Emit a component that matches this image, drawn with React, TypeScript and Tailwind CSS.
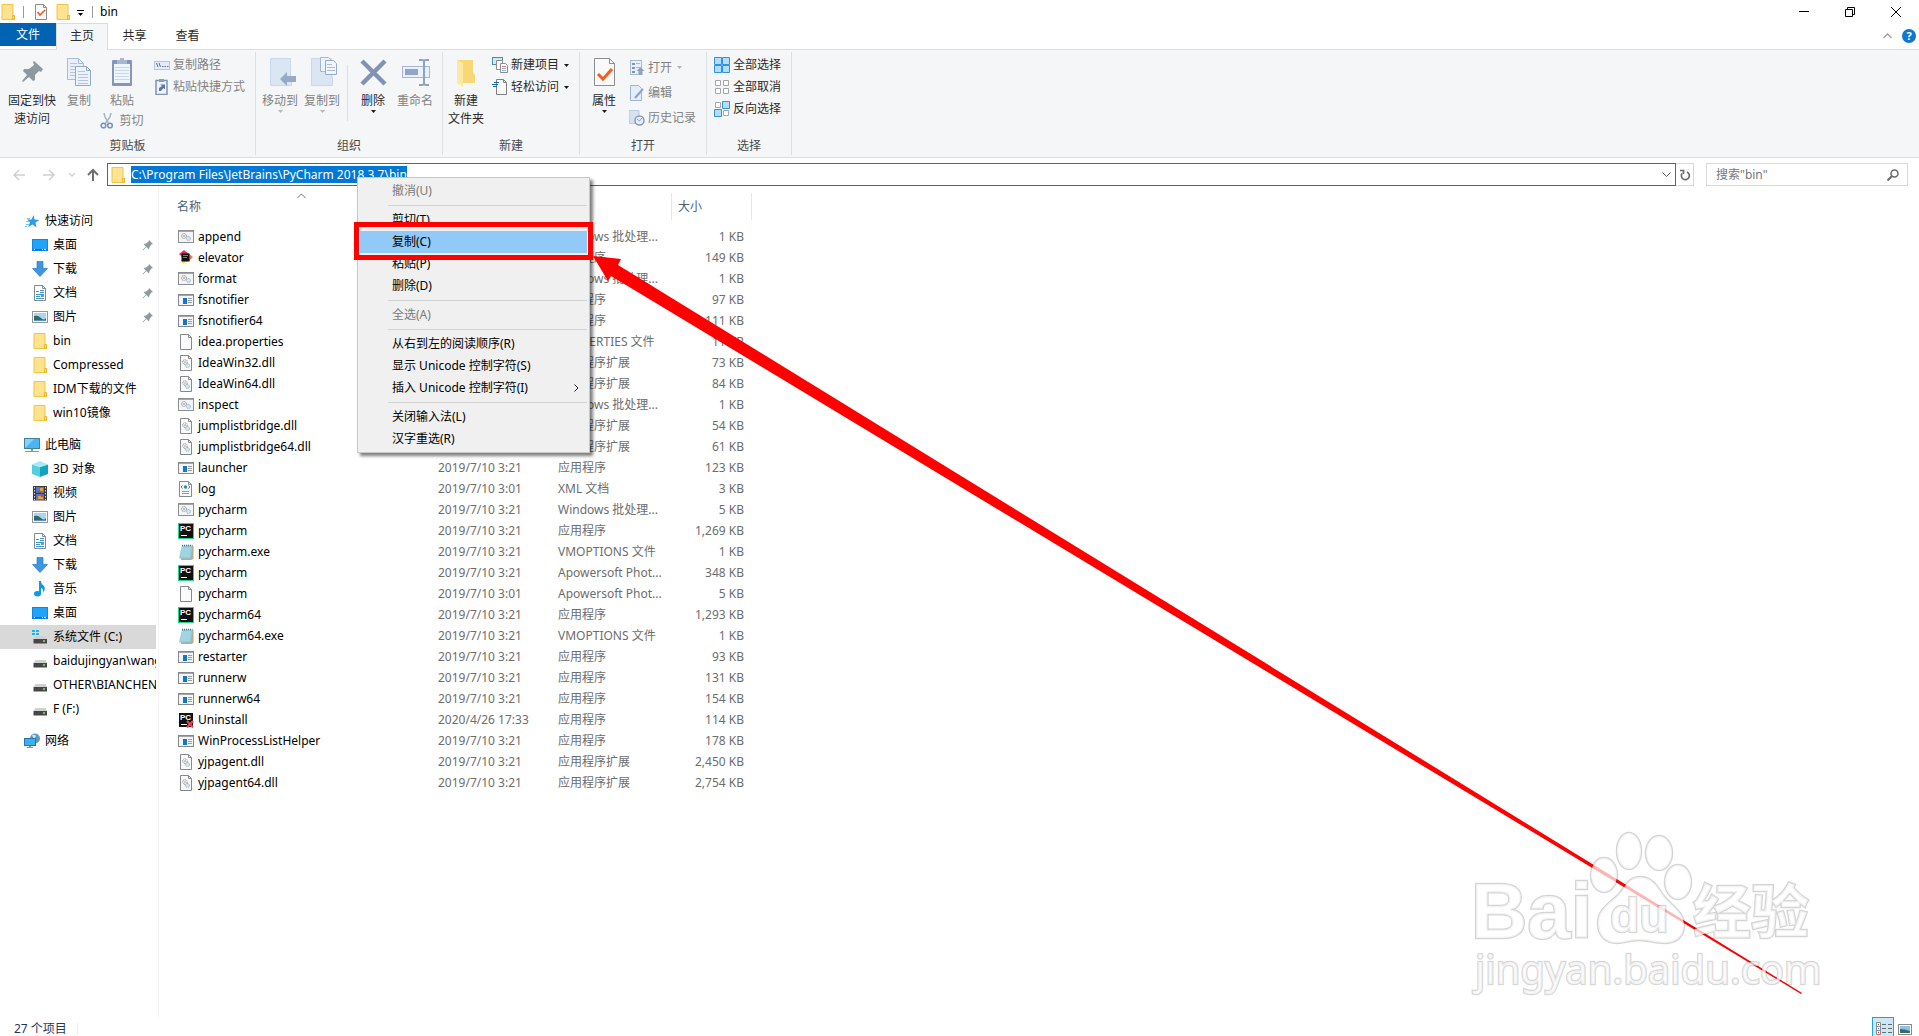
import { ReactNode } from "react";

type IconProps = { className?: string };

const FolderIcon = ({ className = "h-4 w-4" }: IconProps) => (
  <svg viewBox="0 0 16 16" className={className}>
    <path d="M2 .5h11v11h1.500v4H2z" fill="#ffe391" stroke="#f0c541" />
    <path d="M12.500 15.500v-4h2v4z" fill="#ffd76a" stroke="#e9b92f" />
  </svg>
);

const CheckDocIcon = ({ className = "h-4 w-4" }: IconProps) => (
  <svg viewBox="0 0 16 16" className={className}>
    <path d="M2.500 .5h8l3 3v12h-11z" fill="#fafafa" stroke="#8c8c8c" />
    <path d="M10.500 .5v3h3" fill="none" stroke="#8c8c8c" />
    <path d="M4.500 8l2.500 3 5-5" fill="none" stroke="#f25c19" strokeWidth="1.600" />
  </svg>
);

const Triangle = ({ className = "fill-[#1a1a1a]" }: IconProps) => (
  <svg viewBox="0 0 5 3" className={`h-[3px] w-[5px] shrink-0 ${className}`}>
    <path d="M0 0h5L2.500 3z" />
  </svg>
);

const PinBigIcon = () => (
  <svg viewBox="0 0 32 32" className="h-8 w-8">
    <path d="M18 4l9 8-2 3-2-1-4 4 0 5-2 1-4-4-6 5-1-1 5-6-4-4 1-2 5 0 5-4-1-3z" fill="#8d999f" />
  </svg>
);

const CopyBigIcon = () => (
  <svg viewBox="0 0 32 32" className="h-8 w-8">
    <path d="M4.500 1.500h11l5 5v16h-16z" fill="#e9f0f9" stroke="#a9bbd6" />
    <path d="M15.500 1.500v5h5" fill="none" stroke="#a9bbd6" />
    <path d="M7 6.500h7M7 9.500h7M7 12.500h5M7 15.500h5M7 18.500h5" stroke="#b4c4de" />
    <path d="M12.500 9.500h11l4 4v15h-15z" fill="#edf3fa" stroke="#95a9c9" />
    <path d="M23.500 9.500v4h4" fill="none" stroke="#95a9c9" />
    <path d="M15 14.500h7M15 17.500h10M15 20.500h10M15 23.500h10M15 26.500h10" stroke="#b4c4de" />
  </svg>
);

const PasteBigIcon = () => (
  <svg viewBox="0 0 32 32" className="h-8 w-8">
    <rect x="6" y="3" width="20" height="26" rx="1" fill="#8497ba" />
    <rect x="8" y="7" width="16" height="19" fill="#f0f5fb" />
    <path d="M11 5V3h3V1h4v2h3v4H11z" fill="#a9b8d1" />
    <path d="M9 10.500h14M9 13.500h14M9 16.500h14M9 19.500h14M9 22.500h14" stroke="#c9d7ea" />
  </svg>
);

const ScissorsIcon = () => (
  <svg viewBox="0 0 16 16" className="h-4 w-4" fill="none">
    <path d="M4 0l1 4 4 7M11 0l-1 4-5 7" stroke="#a3b2cd" strokeWidth="1.500" />
    <circle cx="3.500" cy="12.500" r="2.300" stroke="#7f93b9" strokeWidth="1.600" />
    <circle cx="10" cy="12.500" r="2.300" stroke="#7f93b9" strokeWidth="1.600" />
  </svg>
);

const CopyPathIcon = () => (
  <svg viewBox="0 0 16 16" className="h-4 w-4">
    <rect x=".5" y="4.500" width="15" height="8" fill="#e3ecf7" stroke="#b6c6de" />
    <path d="M2.500 6l1.500 4M5 6l1.500 4" stroke="#5c7299" />
    <path d="M8 9.500h1.500M10.500 9.500H12M13 9.500h1.500" stroke="#5c7299" />
  </svg>
);

const PasteShortcutIcon = () => (
  <svg viewBox="0 0 16 16" className="h-4 w-4">
    <rect x="2" y="1.500" width="11" height="14" fill="#eef4fb" stroke="#7f92b7" strokeWidth="1.500" />
    <path d="M5 0h5v3H5z" fill="#8b9dbf" />
    <path d="M5 12V9l3-2-2-1.500h5v5L9.500 9 7 12z" fill="#5e769f" />
  </svg>
);

const MoveToIcon = () => (
  <svg viewBox="0 0 32 32" className="h-8 w-8">
    <path d="M6.500 1.500h20v18h1v9h-21z" fill="#dbe6f4" stroke="#cbd8eb" />
    <path d="M16 22l7-7v4h9v6h-9v4z" fill="#98a9c6" />
  </svg>
);

const CopyToIcon = () => (
  <svg viewBox="0 0 32 32" className="h-8 w-8">
    <path d="M5.500 1.500h20v18h1v9h-21z" fill="#dbe6f4" stroke="#cbd8eb" />
    <path d="M14.500.5h8l3 3v11h-11z" fill="#edf3fa" stroke="#a5b6d2" />
    <path d="M19.500 3.500h8l3 3v11h-11z" fill="#f1f6fc" stroke="#95a9c9" />
    <path d="M21 7.500h5M21 10.500h8M21 13.500h8" stroke="#a9bbd8" />
  </svg>
);

const DeleteIcon = () => (
  <svg viewBox="0 0 32 32" className="h-8 w-8">
    <path d="M5 4l23 23M28 4L5 27" stroke="#8193b5" strokeWidth="4.500" />
  </svg>
);

const RenameIcon = () => (
  <svg viewBox="0 0 32 32" className="h-8 w-8" fill="none">
    <rect x="3.500" y="9.500" width="27" height="11" fill="#eaf1fa" stroke="#a7b7d3" />
    <rect x="6" y="12" width="13" height="6" fill="#92a5c6" />
    <path d="M20 3h3q2 0 2 2v21q0 2-2 2h-3M30 3h-3q-2 0-2 2M30 28h-3q-2 0-2-2" stroke="#8fa2c3" strokeWidth="2" />
  </svg>
);

const NewFolderIcon = () => (
  <svg viewBox="0 0 32 32" className="h-8 w-8">
    <path d="M7 3h16v13l2 2v8H12z" fill="#f8d775" />
    <path d="M7 3l6 3v24l-6-4z" fill="#ffe8a3" />
  </svg>
);

const NewItemIcon = () => (
  <svg viewBox="0 0 16 16" className="h-4 w-4">
    <rect x=".5" y=".5" width="10" height="7" fill="#cfeaf5" stroke="#4a8fa8" />
    <path d="M4.500 3.500h6v9h-6z" fill="#fff" stroke="#8c8c8c" />
    <path d="M8.500 6.500h5l2 2v7h-7z" fill="#fff" stroke="#8c8c8c" />
    <path d="M10 9.500h4" stroke="#e57373" />
    <path d="M10 11.500h4M10 13.500h4" stroke="#8fb8e0" />
  </svg>
);

const EasyAccessIcon = () => (
  <svg viewBox="0 0 16 16" className="h-4 w-4">
    <path d="M4.500 .5h7l3 3v12h-10z" fill="#fafafa" stroke="#808080" />
    <path d="M11.500 .5v3h3" fill="none" stroke="#808080" />
    <path d="M2 3.500h5M0 5.500h6M1 7.500h4" stroke="#1a68ad" />
  </svg>
);

const PropertiesIcon = () => (
  <svg viewBox="0 0 32 32" className="h-8 w-8">
    <path d="M6.500 1.500h15l5 5v22h-20z" fill="#fafafa" stroke="#8c8c8c" />
    <path d="M21.500 1.500v5h5" fill="none" stroke="#8c8c8c" />
    <path d="M10 17l5 5 9-10" fill="none" stroke="#f2601f" strokeWidth="3" />
  </svg>
);

const OpenIcon = () => (
  <svg viewBox="0 0 16 16" className="h-4 w-4">
    <rect x="1.500" y=".5" width="11" height="14" fill="#e9f0f9" stroke="#a9b9d4" />
    <path d="M3 3h3v2H3zM3 7h3v2H3zM3 11h3v2H3z" fill="#7f94b9" />
    <path d="M7 3.500h4M7 7.500h4" stroke="#a9b9d4" />
    <path d="M11.500 7l4 4h-2v4h-4v-4h-2z" fill="#8fa1c1" />
  </svg>
);

const EditIcon = () => (
  <svg viewBox="0 0 16 16" className="h-4 w-4">
    <path d="M1.500 .5h8l3 3v12h-11z" fill="#e3edf9" stroke="#a3b4d0" />
    <path d="M6 13l8-9" stroke="#8fa1c1" strokeWidth="2" />
  </svg>
);

const HistoryIcon = () => (
  <svg viewBox="0 0 16 16" className="h-4 w-4">
    <path d="M0 .5h10v6l1 7H.5z" fill="#d5e1f1" stroke="#bccbe1" />
    <circle cx="10.500" cy="10.500" r="4.500" fill="#e9f0f9" stroke="#8799bb" strokeWidth="1.500" />
    <path d="M8 9l2.500 2L13 8" fill="none" stroke="#8799bb" />
  </svg>
);

const SelectAllIcon = () => (
  <svg viewBox="0 0 16 16" className="h-4 w-4" fill="#b5dcfa" stroke="#2f94e0">
    <path d="M.5.5h7v7h-7zM8.500.5h7v7h-7zM.5 8.500h7v7h-7zM8.500 8.500h7v7h-7z" />
  </svg>
);

const SelectNoneIcon = () => (
  <svg viewBox="0 0 16 16" className="h-4 w-4" fill="#fff" stroke="#a6a6a6">
    <path d="M1.500 1.500h5v5h-5zM9.500 1.500h5v5h-5zM1.500 9.500h5v5h-5zM9.500 9.500h5v5h-5z" />
  </svg>
);

const InvertIcon = () => (
  <svg viewBox="0 0 16 16" className="h-4 w-4">
    <path d="M1.500 1.500h5v5h-5zM9.500 9.500h5v5h-5z" fill="#fff" stroke="#a6a6a6" />
    <path d="M8.500.5h7v7h-7zM.5 8.500h7v7h-7z" fill="#b5dcfa" stroke="#2f94e0" />
  </svg>
);

const StarIcon = () => (
  <svg viewBox="0 0 16 16" className="h-4 w-4">
    <path d="M9.500 2l1 4.500 5 .5-4 2.500 1 5-4-3-4.500 2.500 2-4.500-3-3h4.500z" fill="#2d9be6" />
    <path d="M3 5.500h3M2 8.500h3M2 11.500h3M3 13.500H1" stroke="#7cc4f2" />
  </svg>
);

const DesktopIcon = () => (
  <svg viewBox="0 0 16 16" className="h-4 w-4">
    <rect x=".5" y="2.500" width="15" height="11" fill="#1fa4fd" stroke="#1583d8" />
    <path d="M1 12.500h14" stroke="#0c68b4" />
    <path d="M2 12.500h1M10 12.500h1M12 12.500h2" stroke="#fff" />
  </svg>
);

const DownloadIcon = () => (
  <svg viewBox="0 0 16 16" className="h-4 w-4">
    <path d="M5 .5h6v7h4.500L8 15.500.5 7.500H5z" fill="#3b95e2" stroke="#2b7cc9" strokeWidth=".7" />
  </svg>
);

const DocumentIcon = () => (
  <svg viewBox="0 0 16 16" className="h-4 w-4">
    <path d="M2.500.5h8l3 3v12h-11z" fill="#fff" stroke="#828a8f" />
    <path d="M10.500.5v3h3" fill="none" stroke="#828a8f" />
    <path d="M4 6.500h3M8 5.500h4M8 7.500h4M4 9.500h8M4 11.500h4M4 13.500h8" stroke="#3b97d8" />
    <path d="M9 10h3v2H9z" fill="#72a785" />
  </svg>
);

const PictureIcon = () => (
  <svg viewBox="0 0 16 16" className="h-4 w-4">
    <rect x=".5" y="2.500" width="15" height="11" fill="#fff" stroke="#8e989e" />
    <path d="M2 4h12v8H2z" fill="#a9d5f5" />
    <path d="M2 7q4-1 7 2t5 0v3H2z" fill="#39685e" />
    <path d="M2 11h12v1H2z" fill="#5b92bd" />
  </svg>
);

const ComputerIcon = () => (
  <svg viewBox="0 0 16 16" className="h-4 w-4">
    <rect x=".5" y="1.500" width="15" height="10" fill="#4ab4f5" stroke="#41809e" />
    <path d="M1 11V2h9z" fill="#8bd0fa" />
    <path d="M7 12h2v2H7zM1 14h14v1H1z" fill="#8798a2" />
  </svg>
);

const CubeIcon = () => (
  <svg viewBox="0 0 16 16" className="h-4 w-4">
    <path d="M0 3.500L8 6v10l-8-3z" fill="#59cde0" />
    <path d="M16 3.500L8 6v10l8-3z" fill="#14a3bd" />
    <path d="M0 3.500L8 0l8 3.500L8 6z" fill="#a5ebf3" />
  </svg>
);

const VideoIcon = () => (
  <svg viewBox="0 0 16 16" className="h-4 w-4">
    <rect x="1" y="1" width="14" height="14.500" fill="#3a3a3a" />
    <path d="M2.500 2v13M13.500 2v13" stroke="#ddd" strokeDasharray="1.500 1.500" />
    <path d="M4 2h8v6H4zM4 9h8v6H4z" fill="#4d79d4" />
    <path d="M8 3h3v3H8zM6 11h5v3H6z" fill="#e8a03c" />
    <path d="M5 6h4v2H5zM9 10h2v2H9z" fill="#bd483d" />
  </svg>
);

const MusicIcon = () => (
  <svg viewBox="0 0 16 16" className="h-4 w-4">
    <ellipse cx="5.500" cy="12.800" rx="3.500" ry="2.700" fill="#1196ee" />
    <path d="M7 0h2q0 3 3 5 2 3-1 7 1-4-2-5v6H7z" fill="#1196ee" />
  </svg>
);

const DriveIcon = ({ system = false }: { system?: boolean }) => (
  <svg viewBox="0 0 16 16" className="h-4 w-4">
    {system ? <path d="M0 1h3v2H0zM4 1h3v2H4zM0 4h3v2H0zM4 4h3v2H4z" fill="#19b5ef" /> : null}
    <path d="M3.500 7h10l1.500 3H1.500z" fill="#d0d0d0" />
    <rect x="1.500" y="10" width="13.500" height="4.500" fill="#474747" />
    <path d="M11 12h2" stroke="#6cf06c" strokeWidth="1.500" />
  </svg>
);

const NetworkIcon = () => (
  <svg viewBox="0 0 16 16" className="h-4 w-4">
    <circle cx="11" cy="5.500" r="5" fill="#5d9cbd" />
    <path d="M8 2q3-1 4 1l-2 3z" fill="#cde8f3" />
    <rect x=".5" y="5.500" width="11" height="7" fill="#3cb0f7" stroke="#2a77a5" />
    <path d="M5 13h2v1H5zM3 14h6v1H3z" fill="#8798a2" />
  </svg>
);

const PinSmallIcon = () => (
  <svg viewBox="0 0 12 12" className="h-3 w-3">
    <path d="M7 1l4 4-1.500.5L7.500 8 7 10.500 4.500 8 1 11.500l-.5-.5L4 7.500 1.500 5l2.500-.5L6.500 2.500z" fill="#8d999f" />
  </svg>
);

const BatIcon = () => (
  <svg viewBox="0 0 16 16" className="h-4 w-4">
    <rect x=".5" y="1.500" width="15" height="12" fill="#f4f4f4" stroke="#8b8f92" />
    <path d="M1 2.500h14" stroke="#a3a7aa" />
    <circle cx="6" cy="7" r="2.500" fill="#e8e8e8" stroke="#8d9194" strokeDasharray="1 .6" />
    <circle cx="6" cy="7" r=".8" fill="#8d9194" />
    <circle cx="10.500" cy="9.500" r="2" fill="#d5e7f5" stroke="#86aecb" strokeDasharray="1 .6" />
  </svg>
);

const ElevatorIcon = () => (
  <svg viewBox="0 0 16 16" className="h-4 w-4">
    <path d="M1 4l5-4 5 4-7 3z" fill="#ee2d6b" />
    <path d="M10 3l5 4-4 4z" fill="#f5793b" />
    <path d="M3 10h8l-6 4z" fill="#fbe53b" />
    <rect x="3.500" y="3.500" width="8" height="8" fill="#111" />
    <path d="M5 5.500h5M5 7.500h4" stroke="#aaa" strokeWidth=".7" />
  </svg>
);

const ExeIcon = () => (
  <svg viewBox="0 0 16 16" className="h-4 w-4">
    <rect x=".5" y="2.500" width="15" height="11" fill="#f5f5f5" stroke="#85898c" />
    <path d="M1 3.500h14" stroke="#a3a7aa" />
    <rect x="5" y="6" width="4" height="6" fill="#0f77d1" />
    <path d="M10 6.500h4M10 8.500h4M10 10.500h4" stroke="#9a9ea1" />
  </svg>
);

const BlankIcon = () => (
  <svg viewBox="0 0 16 16" className="h-4 w-4">
    <path d="M2.500.5h8l3 3v12h-11z" fill="#fbfbfb" stroke="#85898c" />
    <path d="M10.500.5v3h3" fill="none" stroke="#85898c" />
  </svg>
);

const DllIcon = () => (
  <svg viewBox="0 0 16 16" className="h-4 w-4">
    <path d="M2.500.5h8l3 3v12h-11z" fill="#fbfbfb" stroke="#85898c" />
    <path d="M10.500.5v3h3" fill="none" stroke="#85898c" />
    <circle cx="7" cy="7" r="2.300" fill="#eee" stroke="#8d9194" strokeDasharray="1 .6" />
    <circle cx="7" cy="7" r=".7" fill="#8d9194" />
    <circle cx="9.500" cy="10.500" r="2" fill="#d5e7f5" stroke="#86aecb" strokeDasharray="1 .6" />
  </svg>
);

const XmlIcon = () => (
  <svg viewBox="0 0 16 16" className="h-4 w-4">
    <path d="M1.500.5h9l3 3v12h-12z" fill="#fbfbfb" stroke="#85898c" />
    <path d="M10.500.5v3h3" fill="none" stroke="#85898c" />
    <circle cx="7.500" cy="6" r="1.800" fill="#2d93a8" />
    <path d="M4.500 4.500L3 6l1.500 1.500M10.500 4.500L12 6l-1.500 1.500" fill="none" stroke="#555" strokeWidth=".8" />
    <path d="M4 10.500h7M4 12.500h7" stroke="#9a9ea1" />
  </svg>
);

const PyCharmIcon = ({ uninstall = false }: { uninstall?: boolean }) => (
  <svg viewBox="0 0 16 16" className="h-4 w-4">
    <rect width="16" height="16" fill={uninstall ? "#fff" : "#21d789"} />
    <rect x="1" y="1" width="14" height="14" fill="#111" />
    <text x="2" y="8" fontSize="8" fontWeight="700" fill="#fff" fontFamily="Liberation Sans, sans-serif">PC</text>
    <path d="M3 12.500h6" stroke="#fff" />
    {uninstall ? <path d="M9 9l6 6.500M15 9l-6 6.500" stroke="#ee4454" strokeWidth="2" /> : null}
  </svg>
);

const NotepadIcon = () => (
  <svg viewBox="0 0 16 16" className="h-4 w-4">
    <path d="M5 2h10.500v13L13 16H3z" fill="#b9ab87" />
    <path d="M4 1.500h10.500L13 14.500H1z" fill="#8fcbdc" />
    <path d="M4 4h9M3.500 6h9M3.300 8h9M3 10h9M2.500 12h9" stroke="#b9e3ee" strokeWidth=".8" />
    <path d="M4 1.500h10.500" stroke="#56707a" strokeWidth="1.500" strokeDasharray="1 1" />
  </svg>
);

const fileIcons = {
  bat: <BatIcon />,
  elevator: <ElevatorIcon />,
  exe: <ExeIcon />,
  blank: <BlankIcon />,
  dll: <DllIcon />,
  xml: <XmlIcon />,
  pycharm: <PyCharmIcon />,
  uninstall: <PyCharmIcon uninstall />,
  notepad: <NotepadIcon />,
};

type FileRow = {
  icon: keyof typeof fileIcons;
  name: string;
  date: string;
  type: string;
  size: string;
}

const D = "2019/7/10 3:21";

const files: FileRow[] = [
  { icon: "bat", name: "append", date: D, type: "Windows 批处理...", size: "1 KB" },
  { icon: "elevator", name: "elevator", date: D, type: "应用程序", size: "149 KB" },
  { icon: "bat", name: "format", date: D, type: "Windows 批处理...", size: "1 KB" },
  { icon: "exe", name: "fsnotifier", date: D, type: "应用程序", size: "97 KB" },
  { icon: "exe", name: "fsnotifier64", date: D, type: "应用程序", size: "111 KB" },
  { icon: "blank", name: "idea.properties", date: D, type: "PROPERTIES 文件", size: "11 KB" },
  { icon: "dll", name: "IdeaWin32.dll", date: D, type: "应用程序扩展", size: "73 KB" },
  { icon: "dll", name: "IdeaWin64.dll", date: D, type: "应用程序扩展", size: "84 KB" },
  { icon: "bat", name: "inspect", date: D, type: "Windows 批处理...", size: "1 KB" },
  { icon: "dll", name: "jumplistbridge.dll", date: D, type: "应用程序扩展", size: "54 KB" },
  { icon: "dll", name: "jumplistbridge64.dll", date: D, type: "应用程序扩展", size: "61 KB" },
  { icon: "exe", name: "launcher", date: D, type: "应用程序", size: "123 KB" },
  { icon: "xml", name: "log", date: "2019/7/10 3:01", type: "XML 文档", size: "3 KB" },
  { icon: "bat", name: "pycharm", date: D, type: "Windows 批处理...", size: "5 KB" },
  { icon: "pycharm", name: "pycharm", date: D, type: "应用程序", size: "1,269 KB" },
  { icon: "notepad", name: "pycharm.exe", date: D, type: "VMOPTIONS 文件", size: "1 KB" },
  { icon: "pycharm", name: "pycharm", date: D, type: "Apowersoft Phot...", size: "348 KB" },
  { icon: "blank", name: "pycharm", date: "2019/7/10 3:01", type: "Apowersoft Phot...", size: "5 KB" },
  { icon: "pycharm", name: "pycharm64", date: D, type: "应用程序", size: "1,293 KB" },
  { icon: "notepad", name: "pycharm64.exe", date: D, type: "VMOPTIONS 文件", size: "1 KB" },
  { icon: "exe", name: "restarter", date: D, type: "应用程序", size: "93 KB" },
  { icon: "exe", name: "runnerw", date: D, type: "应用程序", size: "131 KB" },
  { icon: "exe", name: "runnerw64", date: D, type: "应用程序", size: "154 KB" },
  { icon: "uninstall", name: "Uninstall", date: "2020/4/26 17:33", type: "应用程序", size: "114 KB" },
  { icon: "exe", name: "WinProcessListHelper", date: D, type: "应用程序", size: "178 KB" },
  { icon: "dll", name: "yjpagent.dll", date: D, type: "应用程序扩展", size: "2,450 KB" },
  { icon: "dll", name: "yjpagent64.dll", date: D, type: "应用程序扩展", size: "2,754 KB" },
];

type NavItem = {
  label: string;
  icon: ReactNode;
  pinned?: boolean;
  selected?: boolean;
}

const navGroups: { root: NavItem; items: NavItem[] }[] = [
  {
    root: { label: "快速访问", icon: <StarIcon /> },
    items: [
      { label: "桌面", icon: <DesktopIcon />, pinned: true },
      { label: "下载", icon: <DownloadIcon />, pinned: true },
      { label: "文档", icon: <DocumentIcon />, pinned: true },
      { label: "图片", icon: <PictureIcon />, pinned: true },
      { label: "bin", icon: <FolderIcon /> },
      { label: "Compressed", icon: <FolderIcon /> },
      { label: "IDM下载的文件", icon: <FolderIcon /> },
      { label: "win10镜像", icon: <FolderIcon /> },
    ],
  },
  {
    root: { label: "此电脑", icon: <ComputerIcon /> },
    items: [
      { label: "3D 对象", icon: <CubeIcon /> },
      { label: "视频", icon: <VideoIcon /> },
      { label: "图片", icon: <PictureIcon /> },
      { label: "文档", icon: <DocumentIcon /> },
      { label: "下载", icon: <DownloadIcon /> },
      { label: "音乐", icon: <MusicIcon /> },
      { label: "桌面", icon: <DesktopIcon /> },
      { label: "系统文件 (C:)", icon: <DriveIcon system />, selected: true },
      { label: "baidujingyan\\wangluo", icon: <DriveIcon /> },
      { label: "OTHER\\BIANCHENG", icon: <DriveIcon /> },
      { label: "F (F:)", icon: <DriveIcon /> },
    ],
  },
  { root: { label: "网络", icon: <NetworkIcon /> }, items: [] },
];

const TitleBar = () => (
  <header className="flex h-[23px] items-center">
    <FolderIcon />
    <span className="ml-[7px] h-3 w-px bg-[#9a9a9a]" />
    <button aria-label="属性" className="ml-[9px]"><CheckDocIcon /></button>
    <button aria-label="新建文件夹" className="ml-1.5"><FolderIcon /></button>
    <button aria-label="自定义快速访问工具栏" className="ml-1.5 flex flex-col items-center gap-0.5 pt-0.5">
      <span className="h-px w-[7px] bg-black" />
      <Triangle className="fill-black" />
    </button>
    <span className="ml-2 h-3 w-px bg-[#9a9a9a]" />
    <h1 className="ml-[7px] grow">bin</h1>
    <button aria-label="最小化" className="flex w-[46px] justify-center">
      <span className="h-px w-2.5 bg-black" />
    </button>
    <button aria-label="还原" className="flex w-[46px] justify-center">
      <svg viewBox="0 0 10 10" className="h-2.5 w-2.5" fill="none" stroke="#000">
        <path d="M.5 2.500h7v7h-7zM2.500 2.500v-2h7v7h-2" />
      </svg>
    </button>
    <button aria-label="关闭" className="flex w-[46px] justify-center">
      <svg viewBox="0 0 10 10" className="h-2.5 w-2.5" stroke="#000">
        <path d="M0 0l10 10M10 0L0 10" />
      </svg>
    </button>
  </header>
);

const Tabs = () => (
  <nav className="relative z-10 -mb-px flex h-[27px] items-start text-[#2b2b2b]">
    <button className="h-[23px] w-14 bg-[#0063b1] text-white">文件</button>
    <button className="h-[27px] w-[52px] border border-b-0 border-[#d9dbdd] bg-[#f5f6f7] pb-0.5">主页</button>
    <button className="h-[25px] w-[53px]">共享</button>
    <button className="h-[25px] w-[53px]">查看</button>
    <div className="flex h-[26px] grow items-center justify-end gap-2.5 pr-[3px]">
      <button aria-label="最小化功能区">
        <svg viewBox="0 0 9 6" className="h-1.5 w-[9px]" fill="none" stroke="#a0a0a0" strokeWidth="1.300">
          <path d="M.5 5l4-4 4 4" />
        </svg>
      </button>
      <button aria-label="帮助" className="flex h-3.5 w-3.5 items-center justify-center rounded-full bg-[#0f77d1] text-[11px] font-bold text-white">
        ?
      </button>
    </div>
  </nav>
);

type BigButtonProps = {
  icon: ReactNode;
  lines: string[];
  width: string;
  disabled?: boolean;
  menu?: boolean;
}

const BigButton = ({ icon, lines, width, disabled = false, menu = false }: BigButtonProps) => (
  <button
    disabled={disabled}
    className={`flex flex-col items-center self-start pt-[5px] leading-[18px] whitespace-nowrap ${width} ${disabled ? "text-[#838383]" : "text-[#2b2b2b]"}`}
  >
    {icon}
    <span className="mt-[3px] flex flex-col">
      {lines.map((line) => <span key={line}>{line}</span>)}
    </span>
    {menu ? <Triangle className={disabled ? "fill-[#b5b5b5]" : "fill-[#1a1a1a]"} /> : null}
  </button>
);

type SmallButtonProps = {
  icon: ReactNode;
  label: string;
  disabled?: boolean;
  menu?: boolean;
  tall?: boolean;
}

const SmallButton = ({ icon, label, disabled = false, menu = false, tall = false }: SmallButtonProps) => (
  <button
    disabled={disabled}
    className={`flex items-center gap-[3px] whitespace-nowrap ${tall ? "h-[25px]" : "h-[22px]"} ${disabled ? "text-[#838383]" : "text-[#2b2b2b]"}`}
  >
    {icon}
    <span>{label}</span>
    {menu ? <span className="ml-0.5"><Triangle className={disabled ? "fill-[#b5b5b5]" : "fill-[#1a1a1a]"} /></span> : null}
  </button>
);

const RibbonGroup = ({ label, width, children }: { label: string; width: string; children: ReactNode }) => (
  <section aria-label={label} className={`flex flex-col border-r border-[#dcdee0] ${width}`}>
    <div className="flex min-h-[85px] grow">{children}</div>
    <div className="text-center leading-[18px] text-[#4a4a4a]">{label}</div>
  </section>
);

const Ribbon = () => (
  <div className="flex border-y border-[#d9dbdd] bg-[#f5f6f7] py-0.5">
    <RibbonGroup label="剪贴板" width="w-64">
      <div className="flex pl-1">
        <BigButton icon={<PinBigIcon />} lines={["固定到快", "速访问"]} width="w-14" />
        <BigButton icon={<CopyBigIcon />} lines={["复制"]} width="w-[38px]" disabled />
        <div className="flex w-12 flex-col items-center">
          <BigButton icon={<PasteBigIcon />} lines={["粘贴"]} width="w-12" disabled />
          <SmallButton icon={<ScissorsIcon />} label="剪切" disabled />
        </div>
      </div>
      <div className="flex flex-col pt-0.5 pl-2">
        <SmallButton icon={<CopyPathIcon />} label="复制路径" disabled />
        <SmallButton icon={<PasteShortcutIcon />} label="粘贴快捷方式" disabled />
      </div>
    </RibbonGroup>
    <RibbonGroup label="组织" width="w-[187px]">
      <div className="flex pl-[3px]">
        <BigButton icon={<MoveToIcon />} lines={["移动到"]} width="w-[42px]" disabled menu />
        <BigButton icon={<CopyToIcon />} lines={["复制到"]} width="w-[42px]" disabled menu />
        <span className="mx-1 mt-[13px] h-14 w-px bg-[#dcdee0]" />
        <BigButton icon={<DeleteIcon />} lines={["删除"]} width="w-[42px]" menu />
        <BigButton icon={<RenameIcon />} lines={["重命名"]} width="w-[42px]" disabled />
      </div>
    </RibbonGroup>
    <RibbonGroup label="新建" width="w-[137px]">
      <div className="flex pl-[3px]">
        <BigButton icon={<NewFolderIcon />} lines={["新建", "文件夹"]} width="w-10" />
      </div>
      <div className="flex flex-col pt-0.5 pl-1.5">
        <SmallButton icon={<NewItemIcon />} label="新建项目" menu />
        <SmallButton icon={<EasyAccessIcon />} label="轻松访问" menu />
      </div>
    </RibbonGroup>
    <RibbonGroup label="打开" width="w-[127px]">
      <BigButton icon={<PropertiesIcon />} lines={["属性"]} width="w-12" menu />
      <div className="flex flex-col pt-[3px] pl-px">
        <SmallButton icon={<OpenIcon />} label="打开" disabled menu tall />
        <SmallButton icon={<EditIcon />} label="编辑" disabled tall />
        <SmallButton icon={<HistoryIcon />} label="历史记录" disabled tall />
      </div>
    </RibbonGroup>
    <RibbonGroup label="选择" width="w-[85px]">
      <div className="flex flex-col pt-0.5 pl-[7px]">
        <SmallButton icon={<SelectAllIcon />} label="全部选择" />
        <SmallButton icon={<SelectNoneIcon />} label="全部取消" />
        <SmallButton icon={<InvertIcon />} label="反向选择" />
      </div>
    </RibbonGroup>
  </div>
);

const AddressBar = () => (
  <div className="flex items-center pt-[5px] pr-[11px]">
    <div className="flex w-[107px] shrink-0 items-center gap-[18px] pl-[13px]">
      <button aria-label="后退" disabled>
        <svg viewBox="0 0 12 12" className="h-3 w-3" fill="none" stroke="#cfcfcf" strokeWidth="1.500"><path d="M12 6H1M6 1L1 6l5 5" /></svg>
      </button>
      <button aria-label="前进" disabled>
        <svg viewBox="0 0 12 12" className="h-3 w-3" fill="none" stroke="#cfcfcf" strokeWidth="1.500"><path d="M0 6h11M6 1l5 5-5 5" /></svg>
      </button>
      <span className="-mx-1 flex items-center gap-3">
        <button aria-label="最近浏览的位置">
          <svg viewBox="0 0 6 4" className="h-1 w-1.5" fill="none" stroke="#cfcfcf" strokeWidth="1.300"><path d="M0 0l3 3 3-3" /></svg>
        </button>
        <button aria-label="上移">
          <svg viewBox="0 0 12 13" className="h-[13px] w-3" fill="none" stroke="#6e6e6e" strokeWidth="2"><path d="M6 13V2M1 7l5-5 5 5" /></svg>
        </button>
      </span>
    </div>
    <div className="flex h-[23px] grow items-center border border-[#0f77d1] pr-1 pl-0.5">
      <FolderIcon />
      <input
        aria-label="地址"
        className="ml-[5px] field-sizing-content h-[17px] bg-[#0078d7] text-white outline-none"
        defaultValue={"C:\\Program Files\\JetBrains\\PyCharm 2018.3.7\\bin"}
      />
      <button aria-label="以前的位置" className="ml-auto">
        <svg viewBox="0 0 9 6" className="h-1.5 w-[9px]" fill="none" stroke="#555"><path d="M.5.5l4 4 4-4" /></svg>
      </button>
    </div>
    <button aria-label="刷新" className="flex h-[23px] w-[18px] items-center justify-center border border-l-0 border-[#d9d9d9]">
      <svg viewBox="0 0 12 12" className="h-3 w-3" fill="none" stroke="#6a6a6a" strokeWidth="1.700"><path d="M8 3a4 4 0 1 1-5 1.500M1 1.500h3.500V5" /></svg>
    </button>
    <div className="ml-3 flex h-[23px] w-[202px] items-center border border-[#d9d9d9] pr-2 pl-[9px]">
      <input aria-label="搜索" placeholder={'搜索"bin"'} className="min-w-0 grow outline-none placeholder:text-[#767676]" />
      <button aria-label="开始搜索">
        <svg viewBox="0 0 12 12" className="h-3 w-3" fill="none" stroke="#6a6a6a" strokeWidth="1.500"><circle cx="7.500" cy="4.500" r="3.500" /><path d="M5 7L.5 11.500" strokeWidth="2" /></svg>
      </button>
    </div>
  </div>
);

const NavRow = ({ item, root = false }: { item: NavItem; root?: boolean }) => (
  <a
    href="#"
    className={`flex h-6 w-[156px] items-center gap-[5px] overflow-hidden whitespace-nowrap ${root ? "pl-6" : "pl-8"} ${item.selected ? "bg-[#d9d9d9]" : ""}`}
  >
    <span className="shrink-0">{item.icon}</span>
    <span>{item.label}</span>
    {item.pinned ? <span className="mr-0.5 ml-auto"><PinSmallIcon /></span> : null}
  </a>
);

const Sidebar = () => (
  <nav className="flex w-[159px] shrink-0 flex-col gap-2 border-r border-[#f3f3f3] pt-[23px]">
    {navGroups.map((group) => (
      <div key={group.root.label}>
        <NavRow item={group.root} root />
        {group.items.map((item) => <NavRow key={item.label} item={item} />)}
      </div>
    ))}
  </nav>
);

const HeaderCell = ({ label, sorted = false }: { label: string; sorted?: boolean }) => (
  <th className="p-0 pb-1.5 text-left font-normal text-[#4c607a]">
    <button className="relative flex h-[27px] w-full items-center border-r border-[#e5e5e5] pl-1.5">
      {label}
      {sorted ? (
        <svg viewBox="0 0 9 6" className="absolute top-0 left-[126px] h-1.5 w-[9px]" fill="none" stroke="#6a6a6a"><path d="M.5 5l4-4 4 4" /></svg>
      ) : null}
    </button>
  </th>
);

const FileTable = () => (
  <main className="grow pt-[7px] pl-3">
    <table className="w-[581px] table-fixed border-collapse">
      <colgroup>
        <col className="w-[261px]" />
        <col className="w-[120px]" />
        <col className="w-[120px]" />
        <col className="w-20" />
      </colgroup>
      <thead>
        <tr>
          <HeaderCell label="名称" sorted />
          <HeaderCell label="修改日期" />
          <HeaderCell label="类型" />
          <HeaderCell label="大小" />
        </tr>
      </thead>
      <tbody className="text-[#6d6d6d]">
        {files.map((file, idx) => (
          <tr key={`file-${idx}`} className="h-[21px] whitespace-nowrap">
            <td className="p-0 pl-[7px] text-black">
              <div className="flex items-center gap-1">
                {fileIcons[file.icon]}
                <span>{file.name}</span>
              </div>
            </td>
            <td className="p-0 pl-1.5">{file.date}</td>
            <td className="p-0 pl-1.5">{file.type}</td>
            <td className="p-0 pr-2 text-right">{file.size}</td>
          </tr>
        ))}
      </tbody>
    </table>
  </main>
);

const StatusBar = () => (
  <footer className="flex h-[19px] items-start pl-3.5 text-[#1e395b]">
    <span className="pt-0.5 leading-5">27 个项目</span>
    <span className="mt-1.5 ml-2.5 h-3 w-px bg-[#eeeeee]" />
    <button aria-label="详细信息" className="ml-auto h-[19px] w-[22px] overflow-hidden border border-b-0 border-[#26a0da] bg-[#cce8f4]">
      <svg viewBox="0 0 20 18" className="h-[18px] w-5" fill="none">
        <path d="M3.500 4.500h4v4h-4zM3.500 8.500h4v4h-4zM3.500 12.500h4v4h-4z" fill="#fff" stroke="#8c8c8c" />
        <path d="M9 6.500h4M15 6.500h4M9 10.500h4M15 10.500h4M9 14.500h4M15 14.500h4" stroke="#6b6b6b" />
        <path d="M5 6.500h1" stroke="#444" />
        <path d="M5 10.500h1" stroke="#2b7fe0" />
        <path d="M5 14.500h1" stroke="#d33" />
      </svg>
    </button>
    <button aria-label="大缩略图" className="mt-[5px] mr-[7px] ml-1 h-3.5 overflow-hidden">
      <svg viewBox="0 0 14 11" className="h-[11px] w-3.5">
        <rect x=".5" y=".5" width="13" height="10" fill="#fff" stroke="#8c8c8c" />
        <path d="M2 2h10v7H2z" fill="#8fc3ee" />
        <path d="M2 5q5 0 10 2v2H2z" fill="#3c6d63" />
      </svg>
    </button>
  </footer>
);

const menuSections = [
  [{ label: "撤消(U)", disabled: true }],
  [{ label: "剪切(T)" }, { label: "复制(C)", active: true }, { label: "粘贴(P)" }, { label: "删除(D)" }],
  [{ label: "全选(A)", disabled: true }],
  [{ label: "从右到左的阅读顺序(R)" }, { label: "显示 Unicode 控制字符(S)" }, { label: "插入 Unicode 控制字符(I)", submenu: true }],
  [{ label: "关闭输入法(L)" }, { label: "汉字重选(R)" }],
] as { label: string; disabled?: boolean; active?: boolean; submenu?: boolean }[][];

const ContextMenu = () => (
  <div role="menu" className="absolute top-[177px] left-[357px] w-[233px] border border-[#c8c8c8] bg-[#f0f0f0] p-0.5 shadow-[3px_3px_3px_rgba(0,0,0,0.5)]">
    {menuSections.map((section, idx) => (
      <div key={`section-${idx}`}>
        {idx > 0 ? <div className="my-[3px] ml-7 h-px bg-[#d2d2d2]" /> : null}
        {section.map((item) => (
          <button
            key={item.label}
            role="menuitem"
            disabled={item.disabled}
            className={`flex h-[22px] w-full items-center justify-between pr-2 pl-8 ${item.active ? "bg-[#91c9f7]" : ""} ${item.disabled ? "text-[#7a7a7a]" : "text-black"}`}
          >
            {item.label}
            {item.submenu ? (
              <svg viewBox="0 0 5 8" className="h-2 w-[5px]" fill="none" stroke="#222"><path d="M.5.5L4 4 .5 7.500" /></svg>
            ) : null}
          </button>
        ))}
      </div>
    ))}
  </div>
);

const Annotation = () => (
  <>
    <div className="pointer-events-none absolute top-[222px] left-[354px] h-[38px] w-[239px] border-[5px] border-[#ff0000]" />
    <svg viewBox="0 0 1210 740" className="pointer-events-none absolute top-[256px] left-[593px] h-[740px] w-[1210px]">
      <path d="M0 0l28 3-3 6L1209 737l-1 1L18 20l-3 5z" fill="#ff0000" />
    </svg>
  </>
);

const Watermark = () => (
  <svg
    viewBox="0 0 360 180"
    className="pointer-events-none absolute right-[94px] bottom-[36px] h-[180px] w-[360px]"
    fill="#fff"
    fillOpacity=".7"
    stroke="#000"
    strokeOpacity=".17"
    strokeWidth="2.500"
    paintOrder="stroke"
    fontFamily="Liberation Sans, Noto Sans CJK SC, sans-serif"
    fontWeight="700"
  >
    <ellipse cx="139" cy="55" rx="13" ry="17" />
    <ellipse cx="164" cy="31" rx="12" ry="18" />
    <ellipse cx="194" cy="33" rx="13" ry="17" />
    <ellipse cx="213" cy="62" rx="13" ry="17" />
    <path d="M175 57c12 0 17 9 23 18s21 16 21 30c0 12-8 18-20 18-9 0-15-3-25-3s-14 3-22 3c-12 0-19-8-19-20 0-15 14-21 21-29s10-17 21-17z" />
    <text x="6" y="118" fontSize="78">Bai</text>
    <text x="145" y="112" fontSize="48">du</text>
    <text x="228" y="113" fontSize="58">经验</text>
    <text x="10" y="164" fontSize="40" fontWeight="400" fontFamily="Noto Sans, sans-serif">jingyan.baidu.com</text>
  </svg>
);

const App = () => {
  return (
    <div className="relative flex min-h-screen flex-col overflow-hidden bg-white font-['Noto_Sans','Noto_Sans_CJK_SC',sans-serif] text-xs text-black">
      <TitleBar />
      <Tabs />
      <Ribbon />
      <AddressBar />
      <div className="flex grow">
        <Sidebar />
        <FileTable />
      </div>
      <StatusBar />
      <ContextMenu />
      <Annotation />
      <Watermark />
    </div>
  );
}

export default App;
